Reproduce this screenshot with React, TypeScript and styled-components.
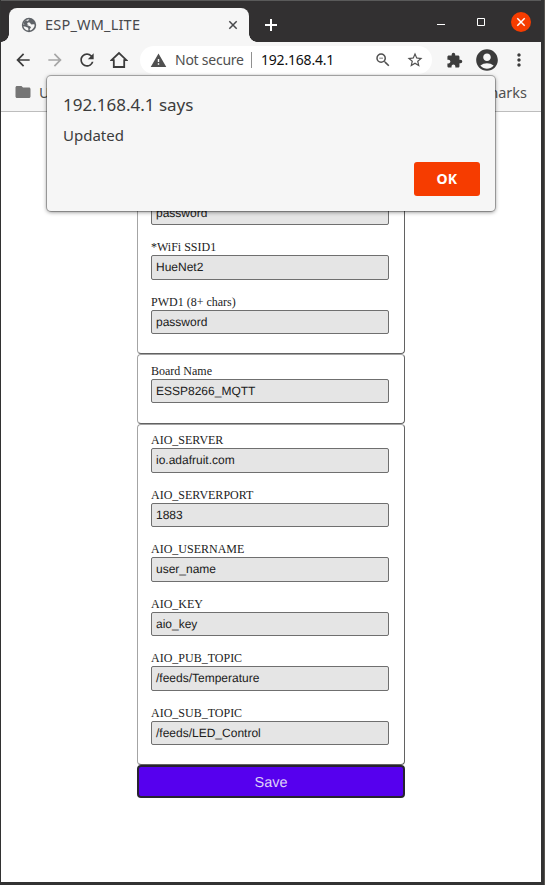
import React from "react";
import styled, { createGlobalStyle } from "styled-components";
import {
  MdArrowBack, MdArrowForward, MdRefresh, MdWarning, MdZoomOut, MdStarBorder,
  MdExtension, MdAccountCircle, MdMoreVert, MdFolder,
} from "react-icons/md";

const Global = createGlobalStyle`
  *, *::before, *::after { box-sizing: border-box; }
  html, body { margin: 0; padding: 0; overflow: hidden; background: #fff; }
  svg { display: block; flex: none; }
`;

const Frame = styled.div`
  position: relative;
  width: 545px;
  height: 885px;
  display: flex;
  flex-direction: column;
  background: #fff;
  border: solid #323232;
  border-width: 0 4px 3px 1px;
  font-family: "Noto Sans", sans-serif;
  overflow: hidden;
`;

const TitleBar = styled.header`
  height: 42px;
  flex: none;
  display: flex;
  align-items: flex-start;
  background: #323031;
  border-top: 1px solid #5a5a5a;
  padding-left: 8px;
`;

const Tab = styled.div`
  position: relative;
  width: 240px;
  height: 34px;
  margin-top: 7px;
  padding: 0 11px 0 12px;
  display: flex;
  align-items: center;
  background: #f6f6f6;
  color: #48494c;
  border-radius: 8px 8px 0 0;
  &::before, &::after {
    content: "";
    position: absolute;
    bottom: 0;
    width: 8px;
    height: 8px;
  }
  &::before { left: -8px; background: radial-gradient(circle at 0 0, #323031 7.5px, #f6f6f6 8px); }
  &::after { right: -8px; background: radial-gradient(circle at 100% 0, #323031 7.5px, #f6f6f6 8px); }
`;

const TabTitle = styled.span`
  flex: 1;
  margin: -2px 0 0 8px;
  font-size: 14.5px;
  letter-spacing: 0.2px;
`;

const NewTab = styled.div`
  margin: 14px 0 0 12px;
  color: #fff;
`;

const WindowButtons = styled.div`
  margin: 11px 10px 0 auto;
  display: flex;
  align-items: center;
`;

const CloseButton = styled.div`
  width: 20px;
  height: 20px;
  margin-left: 25px;
  border-radius: 50%;
  background: #f63c00;
  color: #fff;
  display: flex;
  align-items: center;
  justify-content: center;
`;

const Toolbar = styled.div`
  height: 36px;
  flex: none;
  display: flex;
  align-items: center;
  padding-left: 12px;
  background: #f6f6f6;
  color: #3c3c3c;
`;

const ToolIcon = styled.div<{ $ml?: number; $color?: string }>`
  margin-left: ${(p) => p.$ml ?? 0}px;
  color: ${(p) => p.$color ?? "#3c3c3c"};
`;

const AddressBar = styled.div`
  width: 292px;
  height: 28px;
  margin-left: 12px;
  padding: 0 8px 0 10px;
  display: flex;
  align-items: center;
  background: #fff;
  border-radius: 14px;
  color: #505050;
`;

const Security = styled.span`
  width: 76px;
  margin: -2px 0 0 8px;
  font-size: 14px;
  letter-spacing: -0.25px;
`;

const Divider = styled.span`
  width: 1px;
  height: 16px;
  background: #909090;
`;

const Url = styled.span`
  flex: 1;
  margin: -2px 0 0 9px;
  color: #101010;
  font-size: 14px;
  letter-spacing: -0.2px;
`;

const Bookmarks = styled.div`
  height: 34px;
  flex: none;
  display: flex;
  align-items: center;
  justify-content: space-between;
  padding: 0 14px 5px 13px;
  background: #f6f6f6;
  border-bottom: 1px solid #bdbdbd;
  color: #505050;
  font-size: 14.5px;
  line-height: 18px;
`;

const BookmarkFolder = styled.div`
  display: flex;
  align-items: center;
  gap: 7px;
`;

const Page = styled.main`
  flex: 1;
  min-height: 0;
  width: 268px;
  margin-left: 136px;
  padding-top: 64px;
`;

const Group = styled.section<{ $height: number }>`
  height: ${(p) => p.$height}px;
  padding: 8.85px 13px 0;
  border: 1px solid;
  border-color: #a4a4a4 #626262 #626262 #a4a4a4;
  border-radius: 4px;
`;

const Field = styled.div`
  height: 54.5px;
`;

const Label = styled.label`
  display: block;
  height: 15px;
  line-height: 15px;
  font-family: "Liberation Serif", serif;
  font-size: 12px;
  color: #222;
  white-space: nowrap;
`;

const Input = styled.div`
  width: 238px;
  height: 24.4px;
  padding-left: 4px;
  border: 1px solid #6f6f6f;
  border-radius: 2px;
  background: #e5e5e5;
  color: #202020;
  font-family: "Liberation Sans", sans-serif;
  font-size: 12px;
  line-height: 22px;
  text-rendering: geometricPrecision;
`;

const Save = styled.button`
  display: block;
  width: 268px;
  height: 33px;
  padding: 2px 0 0;
  border: 2px solid #272330;
  border-radius: 4px;
  background: #5600ee;
  color: #ddd0f8;
  font-family: "Liberation Sans", sans-serif;
  font-size: 14.5px;
  line-height: 28px;
  text-rendering: geometricPrecision;
`;

const Dialog = styled.div`
  position: absolute;
  left: 46px;
  top: 76px;
  width: 448px;
  height: 135px;
  padding: 17px 15px 15px 16px;
  display: flex;
  flex-direction: column;
  background: #f6f6f6;
  border-radius: 4px;
  box-shadow: 0 0 0 1px rgba(0, 0, 0, 0.25), 0 1px 4px rgba(0, 0, 0, 0.5);
  color: #3c3c3c;
`;

const DialogTitle = styled.div`
  height: 23px;
  line-height: 23px;
  font-size: 17px;
`;

const DialogText = styled.div`
  margin-top: 9px;
  height: 20px;
  line-height: 20px;
  font-size: 15px;
`;

const OkButton = styled.button`
  align-self: flex-end;
  width: 66px;
  height: 34px;
  margin-top: auto;
  padding: 0 0 1px;
  border: 0;
  border-radius: 3px;
  background: #f63c00;
  color: #fff;
  font: 700 14px "Noto Sans", sans-serif;
  letter-spacing: 0.3px;
`;

const WindowEdge = styled.div`
  position: fixed;
  left: 544px;
  top: 0;
  width: 1px;
  height: 885px;
  background: #56534f;
`;

const groups = [
  {
    height: 178,
    fields: [["", "password"], ["*WiFi SSID1", "HueNet2"], ["PWD1 (8+ chars)", "password"]],
  },
  { height: 69.5, fields: [["Board Name", "ESSP8266_MQTT"]] },
  {
    height: 341.6,
    fields: [
      ["AIO_SERVER", "io.adafruit.com"],
      ["AIO_SERVERPORT", "1883"],
      ["AIO_USERNAME", "user_name"],
      ["AIO_KEY", "aio_key"],
      ["AIO_PUB_TOPIC", "/feeds/Temperature"],
      ["AIO_SUB_TOPIC", "/feeds/LED_Control"],
    ],
  },
];

const HomeIcon = () => (
  <svg width="18" height="18" viewBox="0 0 18 18" fill="none" stroke="currentColor" strokeWidth="1.8">
    <path d="M1.5 9.2 9 2l7.5 7.2h-2.3V16H3.8V9.2Z" />
  </svg>
);

const GlobeIcon = () => (
  <svg width="16" height="16" viewBox="0 0 16 16">
    <circle cx="8" cy="8" r="7.2" fill="#5f6368" />
    <path
      d="M8.3 2.2c-.3 1.3-1.5 1.2-1.8 2.1-.3 1 .8 1.2 1.7 1.3 1.5.2 1.1 1.6 2.4 1.8 1.1.2 1.8-.4 3.1.3-.1 2.7-2 5-4.6 5.7l-.5-1.1c.4-1 1.4-1.1 1.3-2.1-.2-1.1-1.5-1-2.500-1.300-1.100-.4-1.400-1.100-2.800-1.200-.8 0-1.500.1-2.300.2.1-2.900 2.300-5.400 6-5.700Z"
      fill="#f6f6f6"
    />
    <path d="M4.6 3.600c1-.2 2.200.2 2.400 1.400.1 1-1 1.300-.8 2.100.2.7 1.300.7 1.900 1.200-1.800.4-3.900-.6-5.600-.6 0-1.600.8-3.200 2.100-4.100Z" fill="#5f6368" />
    <path d="M2.400 9.200c1.700.1 3.100 1 4.300 1.300.8.3.6 1.400.7 3.100-2.600-.3-4.500-1.900-5-4.400Z" fill="#f6f6f6" />
  </svg>
);

const CrossIcon = () => (
  <svg width="10" height="10" viewBox="0 0 10 10" fill="none" stroke="currentColor" strokeWidth="1.5">
    <path d="m1.300 1.300 7.400 7.400m0-7.400L1.300 8.700" />
  </svg>
);

export default function App() {
  return (
    <Frame>
      <Global />
      <TitleBar>
        <Tab>
          <GlobeIcon />
          <TabTitle>ESP_WM_LITE</TabTitle>
          <CrossIcon />
        </Tab>
        <NewTab>
          <svg width="20" height="20" viewBox="0 0 20 20" fill="none" stroke="currentColor" strokeWidth="2">
            <path d="M4 10h12M10 4v12" />
          </svg>
        </NewTab>
        <WindowButtons>
          <svg width="50" height="20" viewBox="0 0 50 20" fill="none" stroke="#fff">
            <path d="M1 12.500h8M41.500 6.500h7v7h-7Z" />
          </svg>
          <CloseButton>
            <CrossIcon />
          </CloseButton>
        </WindowButtons>
      </TitleBar>

      <Toolbar>
        <ToolIcon><MdArrowBack size={20} /></ToolIcon>
        <ToolIcon $ml={12} $color="#a6a6a6"><MdArrowForward size={20} /></ToolIcon>
        <ToolIcon $ml={12}><MdRefresh size={20} /></ToolIcon>
        <ToolIcon $ml={13}><HomeIcon /></ToolIcon>
        <AddressBar>
          <MdWarning size={17} />
          <Security>Not secure</Security>
          <Divider />
          <Url>192.168.4.1</Url>
          <MdZoomOut size={18} />
          <ToolIcon $ml={14} $color="#505050"><MdStarBorder size={18} /></ToolIcon>
        </AddressBar>
        <ToolIcon $ml={14}><MdExtension size={17} /></ToolIcon>
        <ToolIcon $ml={11}><MdAccountCircle size={26} /></ToolIcon>
        <ToolIcon $ml={9}><MdMoreVert size={20} /></ToolIcon>
      </Toolbar>

      <Bookmarks>
        <BookmarkFolder><MdFolder size={18} color="#757575" />U</BookmarkFolder>
        <span>marks</span>
      </Bookmarks>

      <Page>
        {groups.map((g, i) => (
          <Group key={i} $height={g.height}>
            {g.fields.map(([label, value], j) => (
              <Field key={j}>
                <Label>{label}</Label>
                <Input>{value}</Input>
              </Field>
            ))}
          </Group>
        ))}
        <Save>Save</Save>
      </Page>

      <Dialog>
        <DialogTitle>192.168.4.1 says</DialogTitle>
        <DialogText>Updated</DialogText>
        <OkButton>OK</OkButton>
      </Dialog>
      <WindowEdge />
    </Frame>
  );
}
